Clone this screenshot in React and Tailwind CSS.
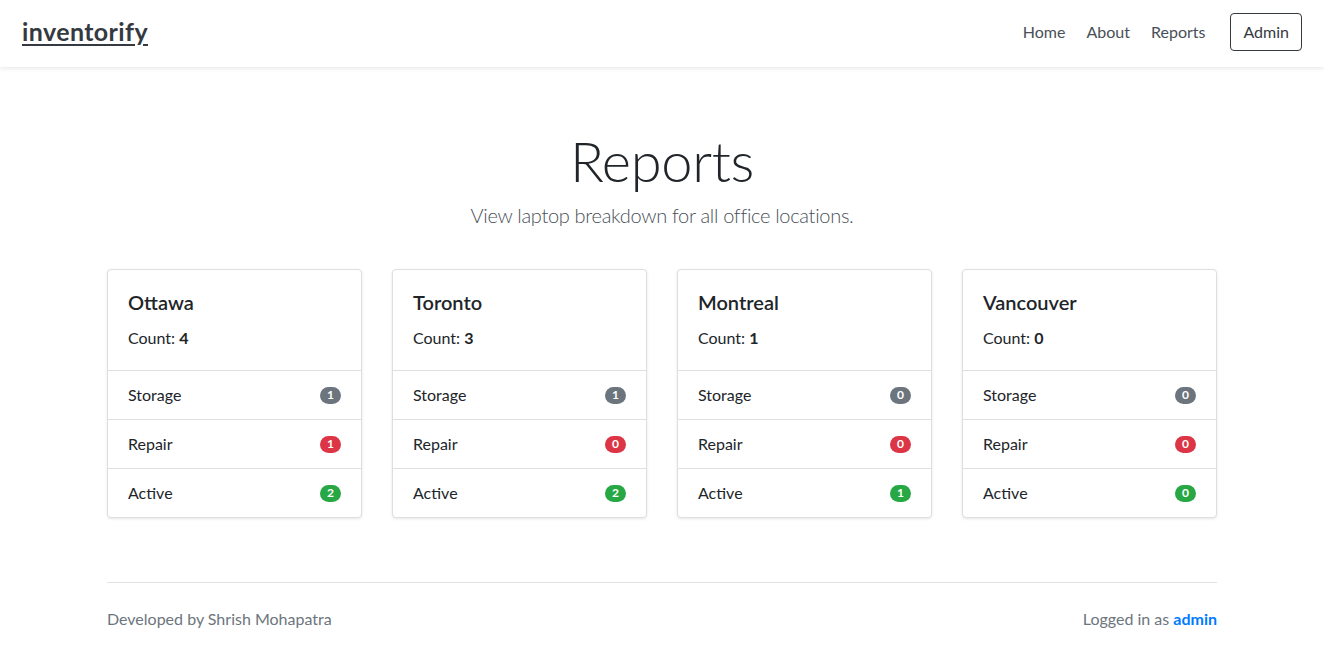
import React from "react";

const cities = [
  { name: "Ottawa", count: 4, storage: 1, repair: 1, active: 2 },
  { name: "Toronto", count: 3, storage: 1, repair: 0, active: 2 },
  { name: "Montreal", count: 1, storage: 0, repair: 0, active: 1 },
  { name: "Vancouver", count: 0, storage: 0, repair: 0, active: 0 },
];

function Badge({ value, color }) {
  return (
    <span
      className={`inline-flex items-center justify-center rounded-full ${color} text-white text-[12px] font-bold leading-none h-[17px] min-w-[21px] px-[7px]`}
    >
      {value}
    </span>
  );
}

function Row({ label, value, color }) {
  return (
    <div className="flex items-center justify-between px-5 py-3 border-t border-[#dfdfdf]">
      <span className="text-[16px] leading-6">{label}</span>
      <Badge value={value} color={color} />
    </div>
  );
}

function Card({ c }) {
  return (
    <div className="bg-white border border-[#dfdfdf] rounded-[4px] shadow-[0_1px_3px_rgba(0,0,0,0.1)]">
      <div className="p-5">
        <h5 className="text-[20px] leading-6 font-semibold mb-3">{c.name}</h5>
        <p className="text-[16px] leading-6">
          Count: <b className="font-bold">{c.count}</b>
        </p>
      </div>
      <Row label="Storage" value={c.storage} color="bg-[#6c757d]" />
      <Row label="Repair" value={c.repair} color="bg-[#dc3545]" />
      <Row label="Active" value={c.active} color="bg-[#28a745]" />
    </div>
  );
}

export default function App() {
  return (
    <div
      className="min-h-[655px] bg-white text-[#212529]"
      style={{ fontFamily: "Lato, 'Open Sans', sans-serif" }}
    >
      <nav className="h-[67px] flex items-center justify-between px-[22px] pb-1 bg-white shadow-[0_2px_4px_rgba(0,0,0,0.08)] relative z-10">
        <a className="text-[25px] tracking-[0.4px] font-bold text-[#343a40] underline decoration-2 underline-offset-[3px] leading-none">
          inventorify
        </a>
        <div className="flex items-center">
          <div className="flex items-center gap-[21px] text-[16px] text-[#495057] leading-6">
            <span>Home</span>
            <span>About</span>
            <span>Reports</span>
          </div>
          <button className="ml-[25px] h-[38px] px-3 border border-[#343a40] rounded-[4px] text-[16px] text-[#343a40] leading-6">
            Admin
          </button>
        </div>
      </nav>

      <main className="w-[1110px] mx-auto">
        <div className="text-center pt-[60px]">
          <h1 className="text-[56px] font-light leading-[67px] tracking-[-0.3px]">Reports</h1>
          <p className="mt-[6px] text-[20px] font-light leading-[30px] tracking-[-0.3px] text-[#495057]">
            View laptop breakdown for all office locations.
          </p>
        </div>

        <div className="grid grid-cols-4 gap-[30px] mt-[39px]">
          {cities.map((c) => (
            <Card key={c.name} c={c} />
          ))}
        </div>

        <hr className="mt-[64px] border-t border-[#e2e2e2]" />
        <div className="flex justify-between items-center pt-6 text-[16px] leading-6 text-[#6c757d]">
          <span>Developed by Shrish Mohapatra</span>
          <span>
            Logged in as <b className="font-bold text-[#007bff]">admin</b>
          </span>
        </div>
      </main>
    </div>
  );
}
